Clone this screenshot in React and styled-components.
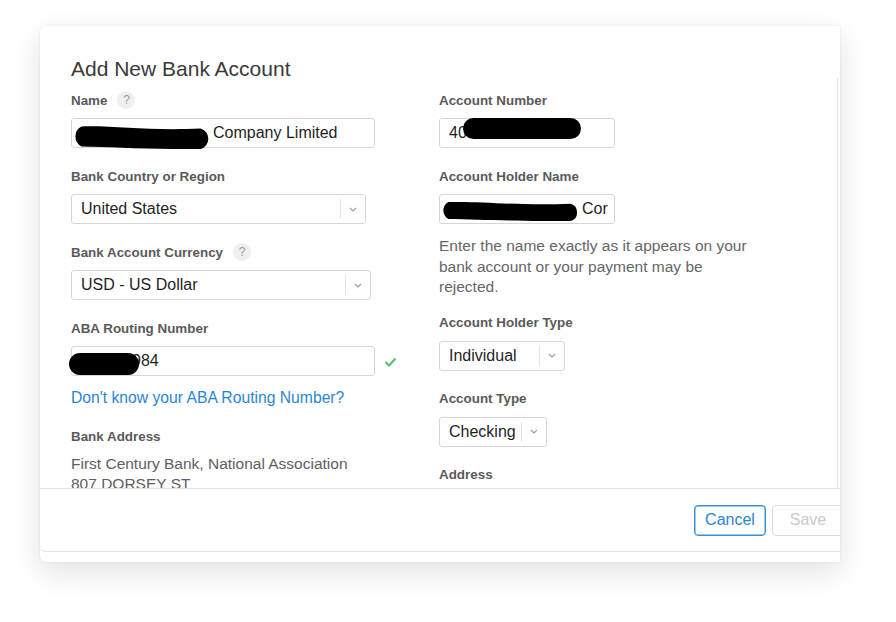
import React from "react";
import styled, { createGlobalStyle } from "styled-components";

const GlobalStyle = createGlobalStyle`
  body {
    margin: 0;
    background: #ffffff;
    font-family: "Liberation Sans", Arial, sans-serif;
  }
`;

const Page = styled.div`
  width: 896px;
  height: 622px;
  padding: 26px 0 0 40px;
  box-sizing: border-box;
  overflow: hidden;
`;

const Modal = styled.div`
  width: 800px;
  height: 536px;
  background: #fff;
  border-radius: 6px 0 0 6px;
  box-shadow: 0 10px 30px rgba(0, 0, 0, 0.12), 0 0 3px rgba(0, 0, 0, 0.07);
  overflow: hidden;
  display: flex;
  flex-direction: column;
`;

const Body = styled.div`
  position: relative;
  flex: none;
  height: 462px;
  padding: 31px 0 0 31px;
  box-sizing: border-box;
  overflow: hidden;
`;

const ScrollTrack = styled.div`
  position: absolute;
  right: 2px;
  top: 52px;
  bottom: 0;
  width: 1px;
  background: #e2e2e2;
`;

const Title = styled.h1`
  margin: 0 0 10px;
  font-size: 21px;
  line-height: 24px;
  font-weight: 400;
  color: #3a3a3a;
`;

const Columns = styled.div`
  display: grid;
  grid-template-columns: 368px 1fr;
`;

const Column = styled.div`
  display: flex;
  flex-direction: column;
`;

const Field = styled.div`
  margin-bottom: ${(p) => p.$gap ?? 19}px;
`;

const Label = styled.div`
  display: flex;
  align-items: center;
  gap: 10px;
  height: 18px;
  margin-bottom: 9px;
  font-size: 13.4px;
  font-weight: 700;
  color: #5a5a5a;
`;

const Help = styled.span`
  display: inline-flex;
  align-items: center;
  justify-content: center;
  width: 18px;
  height: 18px;
  border-radius: 50%;
  background: #efefef;
  color: #9a9a9a;
  font-size: 12px;
  font-weight: 400;
`;

const Row = styled.div`
  display: flex;
  align-items: center;
`;

const InputBox = styled.div`
  display: flex;
  align-items: center;
  width: ${(p) => p.$w}px;
  height: 30px;
  padding: 0 8px 0 9px;
  box-sizing: border-box;
  border: 1px solid #d6d6d6;
  border-radius: 3px;
  background: #fff;
  font-size: 16px;
  color: #1f1f1f;
  white-space: nowrap;
`;

const SelectBox = styled(InputBox)`
  padding-right: 0;
`;

const SelectText = styled.span`
  flex: 1;
`;

const Divider = styled.span`
  width: 1px;
  height: 20px;
  background: #e2e2e2;
`;

const Chevron = styled.span`
  display: flex;
  align-items: center;
  justify-content: center;
  width: 24px;
`;

const Blob = styled.svg`
  flex: none;
  position: relative;
  z-index: 1;
  margin-left: ${(p) => p.$ml || 0}px;
  margin-right: ${(p) => p.$mr || 0}px;
  top: ${(p) => p.$dy || 0}px;
`;

const Check = styled.svg`
  margin-left: 9px;
  margin-top: 2px;
`;

const Link = styled.a`
  display: block;
  margin: 13px 0 20px;
  font-size: 15.7px;
  line-height: 18px;
  color: #2b86d0;
  text-decoration: none;
`;

const PlainText = styled.div`
  font-size: 15.5px;
  line-height: 20px;
  color: #5e5e5e;
`;

const Note = styled.p`
  margin: 0 0 16px;
  max-width: 316px;
  font-size: 15.5px;
  line-height: 20.5px;
  color: #666;
`;

const Footer = styled.div`
  flex: none;
  height: 64px;
  display: flex;
  align-items: center;
  justify-content: flex-end;
  gap: 6px;
  border-top: 1px solid #e3e3e3;
  border-bottom: 1px solid #e3e3e3;
  border-radius: 0 0 0 6px;
  box-sizing: border-box;
`;

const Button = styled.button`
  width: 72px;
  height: 31px;
  border-radius: 4px;
  background: #fff;
  font-family: inherit;
  font-size: 16px;
  border: 1px solid ${(p) => (p.$primary ? "#3a8fd6" : "#dcdcdc")};
  color: ${(p) => (p.$primary ? "#2b86d0" : "#c9c9c9")};
  margin-right: ${(p) => p.$mr || 0}px;
  box-shadow: ${(p) => (p.$primary ? "inset 0 0 0 0.5px #3a8fd6" : "none")};
`;

function Redaction({ w, h, ml, mr, dy, taper }) {
  const r = h / 2;
  const d = taper
    ? `M${r} ${h * 0.1} C ${w * 0.3} ${h * 0.05}, ${w * 0.55} ${h * 0.28}, ${w - r} ${h * 0.18} A ${r * 0.85} ${r * 0.85} 0 0 1 ${w - r} ${h} C ${w * 0.55} ${h * 1.02}, ${w * 0.3} ${h * 0.92}, ${r} ${h * 0.9} A ${r * 0.9} ${r * 0.9} 0 0 1 ${r} ${h * 0.1} Z`
    : `M${r} 0 H ${w - r} A ${r} ${r} 0 0 1 ${w - r} ${h} H ${r} A ${r} ${r} 0 0 1 ${r} 0 Z`;
  return (
    <Blob width={w} height={h} viewBox={`0 0 ${w} ${h}`} $ml={ml} $mr={mr} $dy={dy}>
      <path d={d} fill="#000" />
    </Blob>
  );
}

function Select({ w, children }) {
  return (
    <SelectBox $w={w}>
      <SelectText>{children}</SelectText>
      <Divider />
      <Chevron>
        <svg width="8" height="5" viewBox="0 0 8 5">
          <polyline points="1,1 4,4 7,1" fill="none" stroke="#9a9a9a" strokeWidth="1.1" />
        </svg>
      </Chevron>
    </SelectBox>
  );
}

export default function App() {
  return (
    <>
      <GlobalStyle />
      <Page>
        <Modal>
          <Body>
            <ScrollTrack />
            <Title>Add New Bank Account</Title>
            <Columns>
              <Column>
                <Field>
                  <Label>
                    Name <Help>?</Help>
                  </Label>
                  <InputBox $w={304}>
                    <Redaction w={144} h={25} ml={-12} dy={3} taper />
                    Company Limited
                  </InputBox>
                </Field>
                <Field>
                  <Label>Bank Country or Region</Label>
                  <Select w={295}>United States</Select>
                </Field>
                <Field>
                  <Label>
                    Bank Account Currency <Help>?</Help>
                  </Label>
                  <Select w={300}>USD - US Dollar</Select>
                </Field>
                <Field $gap={0}>
                  <Label>ABA Routing Number</Label>
                  <Row>
                    <InputBox $w={304}>
                      <Redaction w={70} h={22} ml={-12} mr={-7} dy={3} />
                      984
                    </InputBox>
                    <Check width="13" height="10" viewBox="0 0 13 10">
                      <polyline points="1.5,5 5,8.5 11.5,1.5" fill="none" stroke="#55bd6c" strokeWidth="2" />
                    </Check>
                  </Row>
                </Field>
                <Link href="#">Don't know your ABA Routing Number?</Link>
                <Field>
                  <Label>Bank Address</Label>
                  <PlainText>First Century Bank, National Association</PlainText>
                  <PlainText>807 DORSEY ST</PlainText>
                </Field>
              </Column>
              <Column>
                <Field>
                  <Label>Account Number</Label>
                  <InputBox $w={176}>
                    40
                    <Redaction w={118} h={21} ml={-4} dy={-5} />
                  </InputBox>
                </Field>
                <Field $gap={12}>
                  <Label>Account Holder Name</Label>
                  <InputBox $w={176}>
                    <Redaction w={143} h={21} ml={-11} mr={1} dy={1} taper />
                    Cor
                  </InputBox>
                </Field>
                <Note>
                  Enter the name exactly as it appears on your bank account or your payment may be
                  rejected.
                </Note>
                <Field>
                  <Label>Account Holder Type</Label>
                  <Select w={126}>Individual</Select>
                </Field>
                <Field>
                  <Label>Account Type</Label>
                  <Select w={108}>Checking</Select>
                </Field>
                <Field>
                  <Label>Address</Label>
                </Field>
              </Column>
            </Columns>
          </Body>
          <Footer>
            <Button $primary>Cancel</Button>
            <Button $mr={-4}>Save</Button>
          </Footer>
        </Modal>
      </Page>
    </>
  );
}
